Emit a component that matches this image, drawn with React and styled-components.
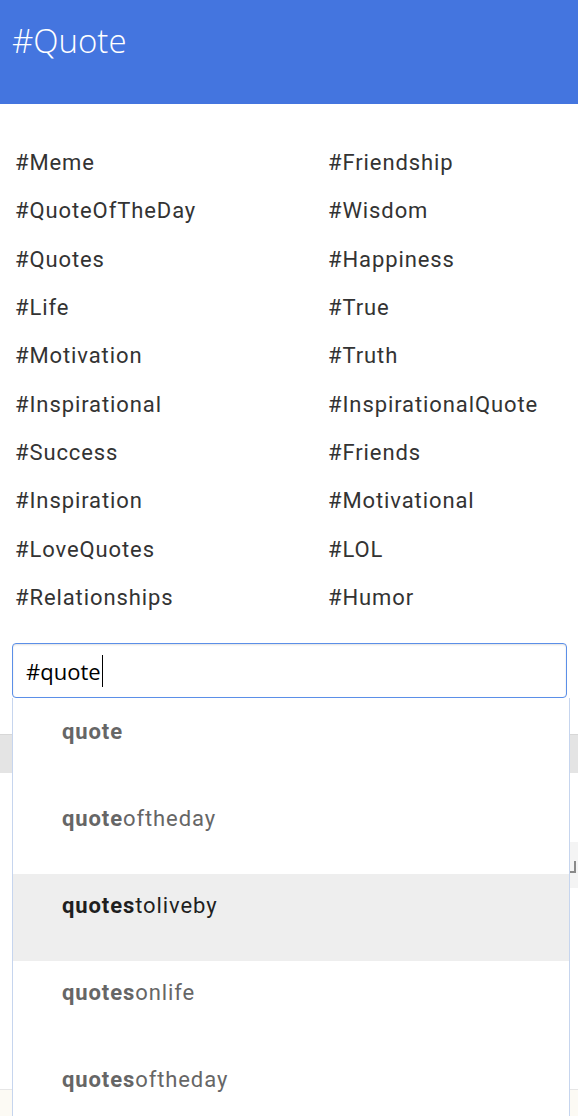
import React from "react";
import styled, { createGlobalStyle } from "styled-components";

const Global = createGlobalStyle`
  html, body { margin: 0; padding: 0; background: #fff; }
  body { font-family: Roboto, "Liberation Sans", sans-serif; }
  * { box-sizing: border-box; }
`;

const Page = styled.div`
  position: relative;
  width: 578px;
  min-height: 1116px;
  display: flex;
  flex-direction: column;
  overflow: hidden;
`;

const Header = styled.header`
  height: 104px;
  background: #4475df;
  padding: 19px 12px 0;
`;

const Title = styled.h1`
  margin: 0;
  font-family: "Open Sans", sans-serif;
  font-weight: 300;
  font-size: 33px;
  line-height: 44px;
  color: #fff;
`;

const TagGrid = styled.div`
  display: grid;
  grid-template-columns: 313px 1fr;
  grid-auto-rows: 48.33px;
  padding: 35px 0 0 15px;
`;

const Tag = styled.div`
  font-family: Roboto, sans-serif;
  font-size: 22px;
  letter-spacing: 0.9px;
  line-height: 48.33px;
  color: #333;
  white-space: nowrap;
`;

const SearchArea = styled.div`
  position: relative;
  margin: 21px 11px 0 12px;
`;

const InputBox = styled.div`
  height: 55px;
  border: 1px solid #5b8fe8;
  border-radius: 4px;
  box-shadow: inset 0 1px 2px rgba(0, 0, 0, 0.12);
  padding: 0 0 0 13px;
  display: flex;
  align-items: center;
  font-family: "Open Sans", sans-serif;
  font-size: 22px;
  color: #000;
`;

const Caret = styled.span`
  display: inline-block;
  width: 1px;
  height: 32px;
  background: #000;
  margin-left: 1px;
`;

const Dropdown = styled.ul`
  position: absolute;
  top: 55px;
  left: 0;
  width: 558px;
  margin: 0;
  padding: 2px 0 0;
  list-style: none;
  background: #fff;
  border: 1px solid #c6d5ee;
  border-top: none;
  z-index: 5;
`;

const Item = styled.li`
  height: 87px;
  padding: 17px 0 0 49px;
  font-family: Roboto, sans-serif;
  font-size: 22px;
  letter-spacing: 0.9px;
  line-height: 30px;
  color: ${(p) => (p.$active ? "#1f1f1f" : "#666")};
  background: ${(p) => (p.$active ? "#eeeeee" : "transparent")};
`;

const Match = styled.b`
  font-weight: 700;
`;

const GrayBar = styled.div`
  margin-top: 36px;
  height: 39px;
  background: #e4e4e4;
  border-top: 1px solid #d7d7d7;
`;

const SideBlock = styled.div`
  margin: 69px 0 0 auto;
  width: 300px;
  height: 46px;
  background: #f4f4f4;
  position: relative;
`;

const Handle = styled.span`
  position: absolute;
  right: 2px;
  top: 19px;
  width: 6px;
  height: 12px;
  border-right: 2px solid #8a8a8a;
  border-bottom: 2px solid #8a8a8a;
`;

const Spacer = styled.div`
  flex: 1 0 199px;
`;

const Footer = styled.footer`
  height: 27px;
  background: #fcfaf4;
  border-top: 1px solid #e6e6e6;
`;

const left = [
  "#Meme",
  "#QuoteOfTheDay",
  "#Quotes",
  "#Life",
  "#Motivation",
  "#Inspirational",
  "#Success",
  "#Inspiration",
  "#LoveQuotes",
  "#Relationships",
];
const right = [
  "#Friendship",
  "#Wisdom",
  "#Happiness",
  "#True",
  "#Truth",
  "#InspirationalQuote",
  "#Friends",
  "#Motivational",
  "#LOL",
  "#Humor",
];

const suggestions = [
  ["quote", ""],
  ["quote", "oftheday"],
  ["quotes", "toliveby"],
  ["quotes", "onlife"],
  ["quotes", "oftheday"],
];

export default function App() {
  const tags = [];
  left.forEach((t, i) => {
    tags.push(<Tag key={"l" + i}>{t}</Tag>);
    tags.push(<Tag key={"r" + i}>{right[i]}</Tag>);
  });
  return (
    <>
      <Global />
      <Page>
        <Header>
          <Title>#Quote</Title>
        </Header>
        <TagGrid>{tags}</TagGrid>
        <SearchArea>
          <InputBox>
            #quote
            <Caret />
          </InputBox>
          <Dropdown>
            {suggestions.map(([m, rest], i) => (
              <Item key={i} $active={i === 2}>
                <Match>{m}</Match>
                {rest}
              </Item>
            ))}
          </Dropdown>
        </SearchArea>
        <GrayBar />
        <SideBlock>
          <Handle />
        </SideBlock>
        <Spacer />
        <Footer />
      </Page>
    </>
  );
}
